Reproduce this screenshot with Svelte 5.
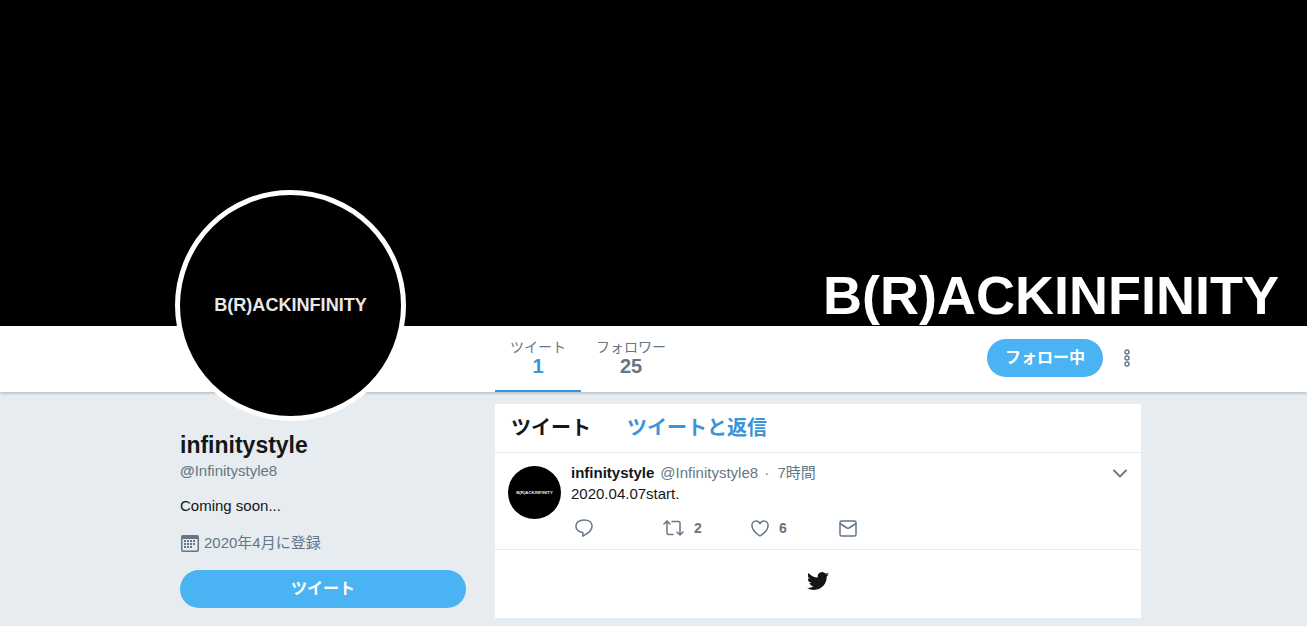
<script lang="ts">
  const profile = {
    name: 'infinitystyle',
    handle: 'Infinitystyle8',
    bio: 'Coming soon...',
    joined: '2020年4月に登録',
    brand: 'B(R)ACKINFINITY',
  };

  const stats = [
    { id: 'tweets', label: 'ツイート', value: 1 },
    { id: 'followers', label: 'フォロワー', value: 25 },
  ];

  const tweet = {
    time: '7時間',
    text: '2020.04.07start.',
    retweets: 2,
    likes: 6,
  };

  let activeStat = $state('tweets');
</script>

{#snippet avatar()}
  <svg class="avatar-image" viewBox="0 0 220 220" role="img" aria-label={profile.brand}>
    <circle cx="110" cy="110" r="110" fill="#000" />
    <text x="110" y="115" text-anchor="middle">{profile.brand}</text>
  </svg>
{/snippet}

<div class="page">
  <header class="banner">
    <span class="banner-title">{profile.brand}</span>
  </header>

  <div class="profile-bar">
    <div class="container columns">
      <div class="avatar-slot">
        <a class="avatar" href="#avatar">{@render avatar()}</a>
      </div>
      <div class="bar-main">
        <nav class="stats" aria-label="プロフィール">
          {#each stats as stat}
            <a
              class="stat"
              class:active={stat.id === activeStat}
              href="#{stat.id}"
              onclick={() => (activeStat = stat.id)}
            >
              <span class="stat-label">{stat.label}</span>
              <span class="stat-value">{stat.value}</span>
            </a>
          {/each}
        </nav>
        <div class="bar-actions">
          <button class="pill follow">フォロー中</button>
          <button class="icon-button" aria-label="その他">
            <svg width="8" height="18" viewBox="0 0 8 18" fill="none" stroke="currentColor" stroke-width="1.4">
              <circle cx="4" cy="3" r="2" />
              <circle cx="4" cy="9" r="2" />
              <circle cx="4" cy="15" r="2" />
            </svg>
          </button>
        </div>
      </div>
    </div>
  </div>

  <div class="container columns content">
    <aside class="sidebar">
      <h1>{profile.name}</h1>
      <a class="handle" href="#profile"><b>@</b>{profile.handle}</a>
      <p class="bio">{profile.bio}</p>
      <p class="joined">
        <svg width="18" height="17" viewBox="0 0 18 17" fill="currentColor">
          <path fill-rule="evenodd" d="M2 0h14a2 2 0 0 1 2 2v13a2 2 0 0 1-2 2H2a2 2 0 0 1-2-2V2a2 2 0 0 1 2-2zM1.500 4v11l.5.5h14l.5-.5V4z" />
          <path d="M6 5h2v2H6zM9 5h2v2H9zM12 5h2v2h-2zM3 5h2v2H3zM3 8h2v2H3zM6 8h2v2H6zM9 8h2v2H9zM12 8h2v2h-2zM3 11h2v2H3zM6 11h2v2H6zM9 11h2v2H9z" />
        </svg>
        {profile.joined}
      </p>
      <button class="pill compose">ツイート</button>
    </aside>

    <main class="timeline">
      <div class="timeline-head">
        <h2>ツイート</h2>
        <a href="#with_replies">ツイートと返信</a>
      </div>

      <article class="tweet">
        <a class="tweet-avatar" href="#profile">{@render avatar()}</a>
        <div class="tweet-body">
          <div class="tweet-meta">
            <b>{profile.name}</b>
            <span class="muted">@{profile.handle}</span>
            <span class="muted time">·&nbsp; {tweet.time}</span>
            <button class="icon-button caret" aria-label="メニュー">
              <svg width="14" height="9" viewBox="0 0 14 9" fill="none" stroke="currentColor" stroke-width="1.8" stroke-linecap="round">
                <path d="M1 1.500l6 6 6-6" />
              </svg>
            </button>
          </div>
          <p class="tweet-text">{tweet.text}</p>
          <div class="tweet-actions">
            <button aria-label="返信">
              <svg width="18" height="18" viewBox="0 0 18 18" fill="none" stroke="currentColor" stroke-width="1.5" stroke-linejoin="round">
                <path d="M7.800 13.400C3.700 13.200.9 10.700.9 7.100.9 3.500 4.200.9 9 .9s8.100 2.500 8.100 6.100c0 4.400-4.200 7.600-9.300 10.100z" />
              </svg>
            </button>
            <button aria-label="リツイート">
              <svg width="21" height="16" viewBox="0 0 21 16" fill="none" stroke="currentColor" stroke-width="1.5" stroke-linecap="round" stroke-linejoin="round">
                <path d="M1 4l3-3 3 3M4 1v12a1.500 1.500 0 0 0 1.500 1.500H10" />
                <path d="M20 12l-3 3-3-3M17 15V3a1.500 1.500 0 0 0-1.500-1.500H9" />
              </svg>
              <span>{tweet.retweets}</span>
            </button>
            <button aria-label="いいね">
              <svg width="18" height="17" viewBox="0 0 18 17" fill="none" stroke="currentColor" stroke-width="1.5" stroke-linejoin="round">
                <path d="M9 16C5 13.300.9 9.400.9 5.400.9 2.800 2.700.9 5 .9c1.800 0 3.200 1 4 2.700C9.800 1.900 11.200.9 13 .9c2.300 0 4.100 1.900 4.100 4.500C17.100 9.400 13 13.300 9 16z" />
              </svg>
              <span>{tweet.likes}</span>
            </button>
            <button aria-label="ダイレクトメッセージ">
              <svg width="18" height="17" viewBox="0 0 18 17" fill="none" stroke="currentColor" stroke-width="1.5" stroke-linejoin="round">
                <rect x="1" y="1" width="16" height="15" rx="1.5" />
                <path d="M1 3.500l7 4.500q1 .6 2 0l7-4.500" />
              </svg>
            </button>
          </div>
        </div>
      </article>

      <div class="timeline-end">
        <svg width="22" height="22" viewBox="0 0 24 24" fill="#14171a" aria-hidden="true">
          <path d="M23.953 4.570a10 10 0 01-2.825.775 4.958 4.958 0 002.163-2.723c-.951.555-2.005.959-3.127 1.184a4.920 4.920 0 00-8.384 4.482C7.690 8.095 4.067 6.130 1.640 3.162a4.822 4.822 0 00-.666 2.475c0 1.710.870 3.213 2.188 4.096a4.904 4.904 0 01-2.228-.616v.060a4.923 4.923 0 003.946 4.827 4.996 4.996 0 01-2.212.085 4.936 4.936 0 004.604 3.417 9.867 9.867 0 01-6.102 2.105c-.390 0-.779-.023-1.170-.067a13.995 13.995 0 007.557 2.209c9.053 0 13.998-7.496 13.998-13.985 0-.210 0-.420-.015-.630A9.935 9.935 0 0024 4.590z" />
        </svg>
      </div>
    </main>
  </div>
</div>

<style>
  :global(body) {
    background: #e6ecf0;
  }

  .page {
    color: #14171a;
    font-family: 'Liberation Sans', 'Noto Sans CJK JP', sans-serif;
    font-size: 15px;
    line-height: 20px;
  }

  h1,
  h2,
  p {
    margin: 0;
  }

  a {
    color: inherit;
    text-decoration: none;
  }

  button {
    padding: 0;
    border: none;
    background: none;
    color: inherit;
    font: inherit;
    cursor: pointer;
  }

  svg {
    display: block;
    flex-shrink: 0;
  }

  .container {
    padding: 0 166px 0 180px;
  }

  .columns {
    display: grid;
    grid-template-columns: 286px minmax(0, 1fr);
    column-gap: 29px;
  }

  .banner {
    display: flex;
    align-items: flex-end;
    justify-content: flex-end;
    box-sizing: border-box;
    height: 326px;
    padding-right: 28px;
    background: #000;
  }

  .banner-title {
    color: #fff;
    font-size: 54px;
    font-weight: bold;
    line-height: 62px;
  }

  .profile-bar {
    background: #fff;
    box-shadow: 0 1px 3px rgba(0, 0, 0, 0.25);
  }

  .avatar-slot {
    position: relative;
  }

  .avatar {
    position: absolute;
    left: -5px;
    bottom: -29px;
    width: 221px;
    height: 221px;
    border: 5px solid #fff;
    border-radius: 50%;
    background: #fff;
  }

  .avatar-image {
    width: 100%;
    height: 100%;
  }

  .avatar-image text {
    fill: #e8e8e8;
    font-size: 18px;
    font-weight: bold;
  }

  .bar-main,
  .bar-actions,
  .stats {
    display: flex;
  }

  .bar-main {
    justify-content: space-between;
    align-items: center;
  }

  .stat {
    display: flex;
    flex-direction: column;
    align-items: center;
    box-sizing: border-box;
    height: 66px;
    padding: 11px 15px 0;
    border-bottom: 2px solid transparent;
    color: #657786;
  }

  .stat.active {
    border-color: #3b94d9;
  }

  .stat-label {
    font-size: 14px;
  }

  .stat-value {
    font-size: 20px;
    font-weight: bold;
    line-height: 18px;
  }

  .stat.active .stat-value {
    color: #3b94d9;
  }

  .bar-actions {
    align-items: center;
    gap: 20px;
    padding-right: 10px;
    padding-bottom: 2px;
  }

  .pill {
    height: 38px;
    border-radius: 19px;
    background: #4ab3f4;
    color: #fff;
    font-size: 16px;
    font-weight: bold;
  }

  .follow {
    width: 116px;
  }

  .icon-button {
    color: #657786;
  }

  .content {
    padding-top: 12px;
    padding-bottom: 8px;
  }

  .sidebar {
    padding-top: 27px;
  }

  .sidebar h1 {
    font-size: 23px;
    line-height: 28px;
  }

  .handle {
    display: block;
    margin-top: 2px;
    color: #657786;
  }

  .bio {
    margin-top: 15px;
  }

  .joined {
    display: flex;
    align-items: center;
    gap: 5px;
    margin: 17px 0;
    padding-left: 1px;
    color: #657786;
  }

  .compose {
    width: 100%;
  }

  .timeline {
    background: #fff;
  }

  .timeline-head {
    display: flex;
    align-items: center;
    gap: 36px;
    height: 48px;
    padding: 0 16px;
    border-bottom: 1px solid #e6ecf0;
    font-size: 20px;
    font-weight: bold;
  }

  .timeline-head h2 {
    font-size: inherit;
  }

  .timeline-head a {
    color: #3b94d9;
  }

  .tweet {
    display: flex;
    gap: 10px;
    padding: 10px 14px 11px 13px;
    border-bottom: 1px solid #e6ecf0;
  }

  .tweet-avatar {
    width: 53px;
    height: 53px;
    margin-top: 3px;
  }

  .tweet-body {
    flex: 1;
  }

  .tweet-meta {
    display: flex;
    align-items: center;
    gap: 6px;
  }

  .muted {
    color: #657786;
  }

  .caret {
    margin-left: auto;
  }

  .tweet-text {
    margin-top: 1px;
  }

  .tweet-actions {
    display: grid;
    grid-template-columns: repeat(4, 88px);
    margin-top: 14px;
    padding-left: 4px;
    color: #657786;
  }

  .tweet-actions button {
    display: flex;
    align-items: center;
    gap: 10px;
    height: 20px;
    font-size: 14px;
    font-weight: bold;
  }

  .timeline-end {
    display: flex;
    justify-content: center;
    padding: 20px 0 26px;
  }
</style>
